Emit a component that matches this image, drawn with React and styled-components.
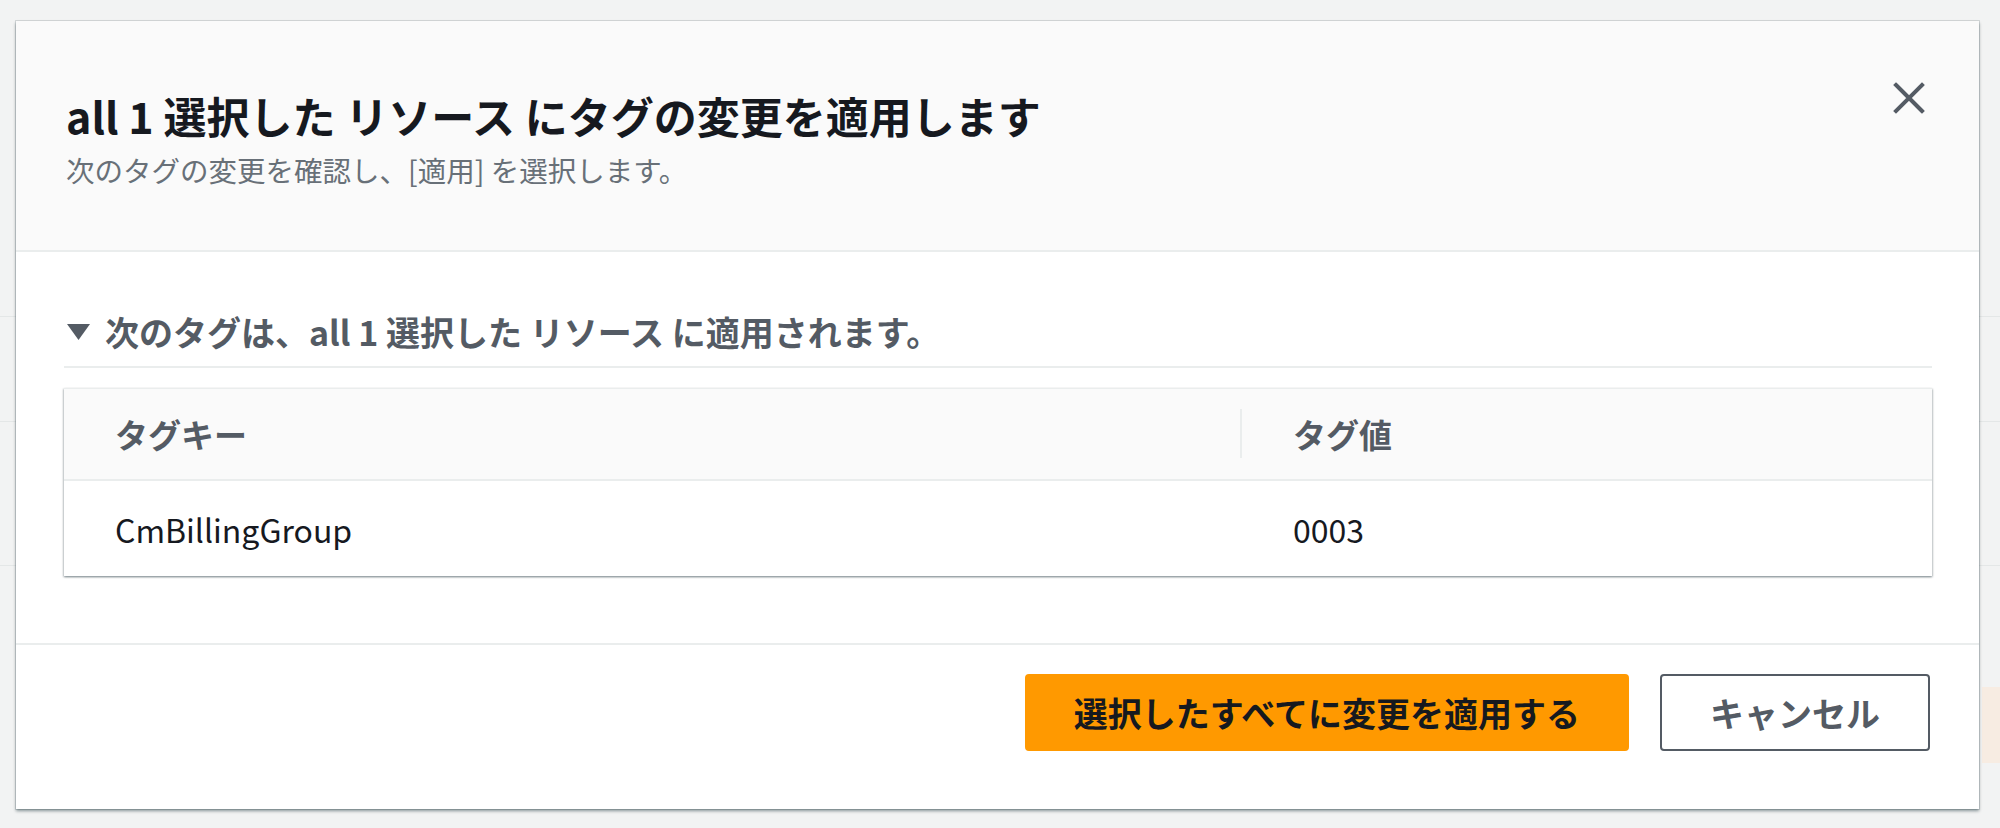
import React from "react";
import styled, { createGlobalStyle } from "styled-components";

const Global = createGlobalStyle`
  html, body {
    margin: 0;
    padding: 0;
  }
  body {
    width: 2000px;
    height: 828px;
    overflow: hidden;
    font-family: "Noto Sans CJK JP", "Noto Sans", sans-serif;
    background-color: #f2f3f3;
    background-image:
      linear-gradient(#f7ece2, #f7ece2),
      linear-gradient(#e4e7e7, #e4e7e7),
      linear-gradient(#e4e7e7, #e4e7e7),
      linear-gradient(#e4e7e7, #e4e7e7);
    background-size: 20px 76px, 100% 1px, 100% 1px, 100% 1px;
    background-position: 1982px 687px, 0 316px, 0 421px, 0 565px;
    background-repeat: no-repeat;
  }
`;

const Page = styled.div`
  padding: 21px 0 0 16px;
`;

const Modal = styled.div`
  width: 1963px;
  background: #ffffff;
  box-shadow: 0 2px 3px 0 rgba(0, 28, 36, 0.45), 0 0 0 1px rgba(0, 28, 36, 0.12);
  display: flex;
  flex-direction: column;
`;

const Header = styled.div`
  display: flex;
  justify-content: space-between;
  align-items: flex-start;
  background: #fafafa;
  border-bottom: 2px solid #eaeded;
  padding: 69px 48px 60px 50px;
`;

const HeaderText = styled.div`
  display: flex;
  flex-direction: column;
`;

const Title = styled.h2`
  margin: 0;
  font-size: 43px;
  line-height: 50px;
  font-weight: 700;
  color: #16191f;
`;

const Subtitle = styled.p`
  margin: 10px 0 0;
  font-size: 28.5px;
  line-height: 40px;
  color: #687078;
`;

const CloseButton = styled.button`
  margin-top: -14px;
  width: 44px;
  height: 44px;
  padding: 0;
  border: none;
  background: transparent;
  display: flex;
  align-items: center;
  justify-content: center;
  cursor: pointer;
`;

const Body = styled.div`
  padding: 58px 47px 67px 48px;
`;

const Expander = styled.div`
  display: flex;
  align-items: center;
  gap: 15px;
  padding: 0 0 12px 3px;
  border-bottom: 2px solid #eaeded;
`;

const ExpanderLabel = styled.span`
  font-size: 34px;
  line-height: 44px;
  font-weight: 700;
  color: #545b64;
`;

const Table = styled.div`
  margin-top: 20px;
  display: grid;
  grid-template-columns: 1178px 1fr;
  background: #ffffff;
  box-shadow: 0 1px 2px 0 rgba(0, 28, 36, 0.35), 1px 1px 2px 0 rgba(0, 28, 36, 0.15),
    -1px 1px 2px 0 rgba(0, 28, 36, 0.15);
  border-top: 1px solid #eaeded;
`;

const HeadCell = styled.div`
  position: relative;
  height: 90px;
  display: flex;
  align-items: center;
  padding-left: 51px;
  background: #fafafa;
  border-bottom: 2px solid #eaeded;
  font-size: 33px;
  font-weight: 700;
  color: #545b64;
`;

const ColumnRule = styled.span`
  position: absolute;
  left: -2px;
  top: 20px;
  bottom: 21px;
  width: 2px;
  background: #eaeded;
`;

const Cell = styled.div`
  height: 95px;
  display: flex;
  align-items: center;
  padding-left: 51px;
  font-size: 32px;
  color: #16191f;
`;

const Footer = styled.div`
  display: flex;
  justify-content: flex-end;
  gap: 31px;
  border-top: 2px solid #eaeded;
  padding: 29px 49px 58px;
`;

const Button = styled.button`
  height: 77px;
  padding: 0 ${(p) => (p.$primary ? "47px" : "48px")};
  border-radius: 4px;
  font-family: inherit;
  font-size: 34px;
  font-weight: 700;
  cursor: pointer;
  border: 2px solid ${(p) => (p.$primary ? "#ff9900" : "#545b64")};
  background: ${(p) => (p.$primary ? "#ff9900" : "#ffffff")};
  color: ${(p) => (p.$primary ? "#16191f" : "#545b64")};
`;

const CloseIcon = () => (
  <svg width="32" height="32" viewBox="0 0 32 32" aria-hidden="true">
    <path d="M3 3 L29 29 M29 3 L3 29" stroke="#545b64" strokeWidth="4" strokeLinecap="square" fill="none" />
  </svg>
);

const CaretDown = () => (
  <svg width="23" height="16" viewBox="0 0 23 16" aria-hidden="true">
    <path d="M0 0 H23 L11.5 16 Z" fill="#545b64" />
  </svg>
);

export default function App() {
  return (
    <>
      <Global />
      <Page>
        <Modal>
          <Header>
            <HeaderText>
              <Title>all 1 選択した リソース にタグの変更を適用します</Title>
              <Subtitle>次のタグの変更を確認し、[適用] を選択します。</Subtitle>
            </HeaderText>
            <CloseButton aria-label="閉じる">
              <CloseIcon />
            </CloseButton>
          </Header>
          <Body>
            <Expander>
              <CaretDown />
              <ExpanderLabel>次のタグは、all 1 選択した リソース に適用されます。</ExpanderLabel>
            </Expander>
            <Table>
              <HeadCell>タグキー</HeadCell>
              <HeadCell>
                <ColumnRule />
                タグ値
              </HeadCell>
              <Cell>CmBillingGroup</Cell>
              <Cell>0003</Cell>
            </Table>
          </Body>
          <Footer>
            <Button $primary>選択したすべてに変更を適用する</Button>
            <Button>キャンセル</Button>
          </Footer>
        </Modal>
      </Page>
    </>
  );
}
